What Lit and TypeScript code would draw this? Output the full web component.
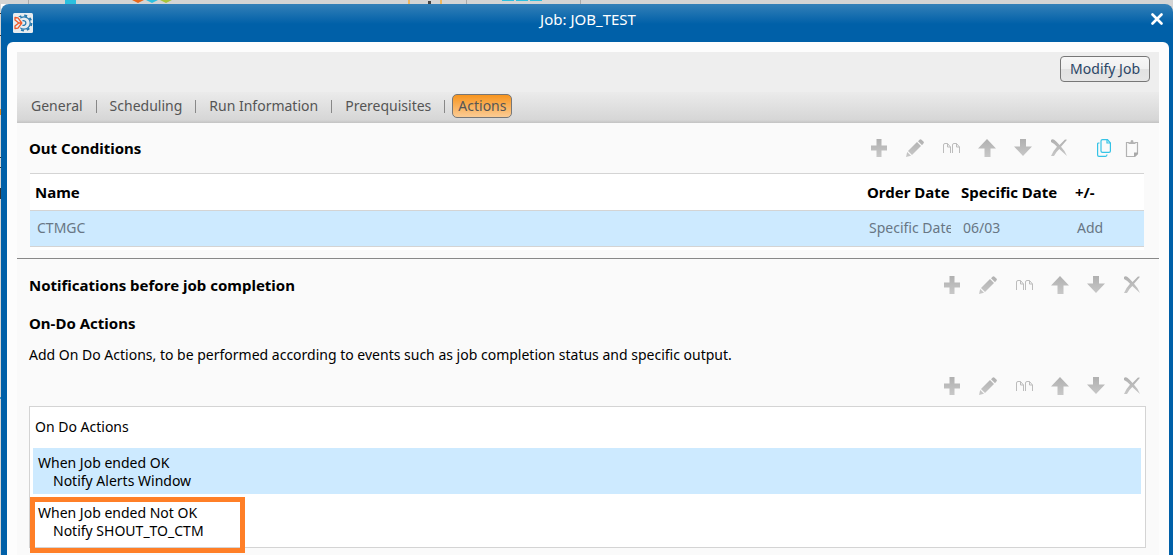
import { LitElement, html, css, svg } from "lit";
import { customElement, property, state } from "lit/decorators.js";

const glyphs: Record<string, unknown> = {
  add: svg`<path fill="url(#g)" d="M6.500 0h5v6.500H17v5h-5.500V18h-5v-6.500H1v-5h5.500z"/>`,
  edit: svg`<g fill="url(#g)"><path d="M0 18l1.200-5 3.800 3.800z"/><path d="M2 12L11 3l4 4-9 9z"/><path d="M12 2.200L13.500.7q1-1 2 0l1.900 1.900q1 1 0 2L16 6.200z"/></g>`,
  duplicate: svg`<g fill="none" stroke="#bcbcbc"><path d="M1.500 14V6q0-1.500 1.500-1.500h2.500L8.500 8v6"/><path d="M5.500 4.500V8h3"/><path d="M10.500 14V6q0-1.500 1.500-1.500h2.500L17.500 8v6"/><path d="M14.500 4.500V8h3"/></g>`,
  up: svg`<path fill="url(#g)" d="M9 0l9 9.500h-5.500V18h-6V9.500H0z"/>`,
  down: svg`<path fill="url(#g)" d="M6 0h6v7.500h6L9 17 0 7.500h6z"/>`,
  remove: svg`<path fill="url(#g)" d="M1 1q1.500-1.500 3.500 0Q7 3 9.500 6L15 .6l2 .2-6 7q4 4 6 9.200Q13 13.500 9.300 10 6 13 4 17H1q2-5 6-9.200Q4.500 4.500 1 3z"/>`,
  copy: svg`<g fill="none" stroke="#35c3e6" stroke-width="1.200"><path d="M7.500.6h5L15.400 4v8q0 1.400-1.400 1.400H7.500Q6 13.400 6 12V2Q6 .6 7.500.6z"/><path d="M12 .6V4h3.400M4.500 4H3.600Q2.600 4 2.600 5v11q0 1.400 1.400 1.400h6.500q1.500 0 1.500-1.800"/></g>`,
  paste: svg`<path d="M6 3.500H3.500v14h8l3-3v-11H12" fill="none" stroke="#b2b2b2" stroke-width="1.200"/><path d="M5.500 5V3.200h2Q7.500 1 9 1t1.500 2.200h2V5z" fill="#b2b2b2"/><path d="M11 17.500v-4h4v1.500l-2.500 2.500z" fill="#a9a9a9"/>`,
};

@customElement("tool-button")
class ToolButton extends LitElement {
  @property() glyph = "add";
  @property() label = "";
  static styles = css`
    :host { display: block; flex: 0 0 auto; }
    .btn { display: flex; width: 100%; justify-content: center; padding: 0; border: 0; background: none; cursor: pointer; }
    .art { display: block; width: 18px; height: 18px; }
  `;
  render() {
    return html`<button class="btn" type="button" aria-label=${this.label}>
      <svg class="art" viewBox="0 0 18 18" aria-hidden="true">
        <defs><linearGradient id="g" gradientUnits="userSpaceOnUse" x1="0" y1="0" x2="0" y2="18">
          <stop offset="0" stop-color="#b0b0b0"/><stop offset="1" stop-color="#c8c8c8"/>
        </linearGradient></defs>
        ${glyphs[this.glyph]}
      </svg></button>`;
  }
}

const tools = [
  ["add", "Add"], ["edit", "Edit"], ["duplicate", "Duplicate"],
  ["up", "Move up"], ["down", "Move down"], ["remove", "Delete"],
];

@customElement("app-root")
class AppRoot extends LitElement {
  @state() tab = "Actions";

  static styles = css`
    :host { display: block; position: relative; min-height: 100vh; overflow: hidden; background: #d4d4d4;
      font-family: "Noto Sans", sans-serif; font-size: 14px; line-height: 18px; color: #000; }
    * { box-sizing: border-box; }
    .backdrop { position: absolute; left: 0; top: 0; }
    .window { position: relative; margin: 4px 0 0 1px; padding: 0 4px 0 6px; border-radius: 8px 8px 0 0;
      background: linear-gradient(#3480b8, #0060a8 20px); min-height: calc(100vh - 4px); display: flex; flex-direction: column; }
    .title { display: grid; grid-template-columns: 24px 1fr 24px; height: 38px; align-items: start; padding-top: 6px; }
    .logo { display: block; margin: 3px 0 0 6px; }
    .caption { margin: 0; font-size: 15px; font-weight: 400; text-align: center; color: #fff; }
    .close { border: 0; padding: 3px 0 0; background: none; display: flex; justify-content: center; }
    .body { flex: 1; background: #fdfdfd; border-radius: 6px 6px 0 0; padding: 10px 10px 0; display: flex; flex-direction: column; }
    .panel { flex: 1; background: #fafafa; }
    .bar { height: 40px; background: #eee; display: flex; justify-content: flex-end; padding: 4px 9px 0 0; }
    .modify { height: 26px; padding: 0 9px; border: 1px solid #777; border-radius: 4px; font: inherit; color: #2b4666;
      background: linear-gradient(#f7f7f7, #f0f0f0 48%, #e2e2e2 50%, #e6e6e6); }
    .tabs { height: 31px; display: flex; align-items: center; padding: 0 0 3px 8px; background: linear-gradient(#ebebeb, #d6d6d6 28px, #c2c2c2); }
    .tab { height: 24px; padding: 0 5px; border: 1px solid transparent; border-radius: 5px; background: none; font: inherit; color: #555; }
    .tab.on { border-color: #777; background: linear-gradient(#f7941e, #fbcb94); }
    .sep { width: 1px; height: 13px; background: #888; margin: 0 7px; }
    .section { padding: 13px 0 8px 12px; border-bottom: 1px solid #888; }
    .row { display: flex; justify-content: space-between; align-items: center; height: 24px; }
    .head { margin: 0; font-size: 15px; line-height: 24px; font-weight: 700; }
    .tools { display: flex; align-items: center; margin-left: auto; padding-right: 9px; }
    .tool { width: 36px; }
    .clip { display: flex; margin: 0 4px 0 13px; }
    .cliptool { width: 28px; }
    .grid { margin: 13px 15px 0 1px; background: #fff; padding-bottom: 3px; border-top: 1px solid #d4d4d4; }
    .table { width: 100%; table-layout: fixed; border-collapse: collapse; }
    .table th, .table td { text-align: left; padding: 0; height: 36px; border-bottom: 1px solid #d4d4d4; overflow: hidden; white-space: nowrap; }
    .table th { font-size: 15px; }
    .table th:nth-child(-n+2) { padding-left: 5px; }
    .table th:nth-child(n+3) { padding-left: 10px; }
    .table td { background: #cdeaff; color: #687684; }
    .table td:nth-child(-n+2) { padding-left: 7px; }
    .table td:nth-child(n+3) { padding-left: 12px; }
    .c2 { width: 89px; } .c3 { width: 114px; } .c4 { width: 79px; }
    .lower { padding: 14px 0 0 12px; display: flex; flex-direction: column; }
    .second { margin-top: 14px; }
    .note { margin: 11px 0 10px; }
    .list { position: relative; margin: 8px 13px 7px 0; padding: 0 4px 0 3px; height: 142px; background: #fff; border: 1px solid #d4d4d4; }
    .legend { padding: 11px 2px 12px; }
    .items { list-style: none; margin: 0; padding: 0; }
    .item { padding: 6px 5px 4px; height: 46px; margin-bottom: 4px; }
    .item.sel { background: #cdeaff; }
    .what { padding-left: 15px; }
    .mark { position: absolute; left: 0; top: 90px; width: 215px; height: 56px; border: 5px solid #ff7f27; }
  `;

  tools(clip = false) {
    return html`<div class="tools">
      ${tools.map(([g, l]) => html`<tool-button class="tool" glyph=${g} label=${l}></tool-button>`)}
      ${clip ? html`<div class="clip">
        <tool-button class="cliptool" glyph="copy" label="Copy"></tool-button>
        <tool-button class="cliptool" glyph="paste" label="Paste"></tool-button></div>` : ""}
    </div>`;
  }

  render() {
    const tabs = ["General", "Scheduling", "Run Information", "Prerequisites", "Actions"];
    return html`
      <svg class="backdrop" width="600" height="555" aria-hidden="true">
        <path fill="#aaa" d="M28 0h1v4h-1zM466 0h1v4h-1zM580 0h1v4h-1z"/>
        <path fill="#2cc0df" d="M65 0h11v4H65zM146 0h12l-6 3zM502 0h12v1h-12zM516 0h12v1h-12zM530 0h12v1h-12z"/>
        <path fill="#e8681c" d="M132 0h12l-6 3z"/><path fill="#a9c43c" d="M160 0h12l-6 3z"/>
        <path fill="#f0b75e" d="M408 0h2v4h-2zM440 0h2v4h-2z"/><path fill="#444" d="M428 1h3v3h-3z"/>
        <path fill="#fff" d="M1 4h8v8H1z"/>
        <path fill="#333" d="M0 13h1v1H0zM0 35h1v1H0zM0 157h1v1H0zM0 167h1v1H0zM0 188h1v11H0z"/>
        <path fill="#e58a1c" d="M0 109h1v6H0z"/><path fill="#3c8cbc" d="M0 397h1v2H0z"/>
      </svg>
      <main class="window">
        <header class="title">
          <svg class="logo" width="20" height="20" viewBox="0 0 20 20" aria-hidden="true">
            <rect width="20" height="20" rx="1.500" fill="#e8ecef"/>
            <circle cx="11" cy="10" r="7.400" fill="none" stroke="#2478ae" stroke-width="2" stroke-dasharray="2.900 2.910"/>
            <circle cx="11" cy="10" r="6.200" fill="#e8ecef" stroke="#2478ae" stroke-width="1.200"/>
            <path d="M0 4h7l2 6-2 6H0z" fill="#e8ecef"/>
            <path d="M9.500 7.800a2.400 2.400 0 1 1 0 4.400" fill="none" stroke="#2478ae" stroke-width="1.300"/>
            <path d="M8.800 10L5 4.800 2 4.500V7l3.800 3L2 13v2.500l3-.3zM4.500 10h4" fill="none" stroke="#ef5a2b" stroke-width="1.300" stroke-linejoin="round"/>
          </svg>
          <h1 class="caption">Job: JOB_TEST</h1>
          <button class="close" type="button" aria-label="Close">
            <svg width="12" height="12" viewBox="0 0 12 12" aria-hidden="true"><path d="M1.500 1.500l9 9m0-9l-9 9" stroke="#fff" stroke-width="2.600" stroke-linecap="round"/></svg>
          </button>
        </header>
        <div class="body"><div class="panel">
          <div class="bar"><button class="modify" type="button">Modify Job</button></div>
          <nav class="tabs">${tabs.map((t, i) => html`${i ? html`<span class="sep"></span>` : ""}<button type="button"
            class="tab ${t === this.tab ? "on" : ""}" @click=${() => (this.tab = t)}>${t}</button>`)}</nav>
          <section class="section">
            <div class="row"><h2 class="head">Out Conditions</h2>${this.tools(true)}</div>
            <div class="grid"><table class="table">
              <colgroup><col><col class="c2"><col class="c3"><col class="c4"></colgroup>
              <thead><tr><th>Name</th><th>Order Date</th><th>Specific Date</th><th>+/-</th></tr></thead>
              <tbody><tr><td>CTMGC</td><td>Specific Date</td><td>06/03</td><td>Add</td></tr></tbody>
            </table></div>
          </section>
          <section class="lower">
            <div class="row"><h2 class="head">Notifications before job completion</h2>${this.tools()}</div>
            <h2 class="head second">On-Do Actions</h2>
            <p class="note">Add On Do Actions, to be performed according to events such as job completion status and specific output.</p>
            <div class="row">${this.tools()}</div>
            <div class="list">
              <div class="legend">On Do Actions</div>
              <ul class="items">
                <li class="item sel"><div>When Job ended OK</div><div class="what">Notify Alerts Window</div></li>
                <li class="item"><div>When Job ended Not OK</div><div class="what">Notify SHOUT_TO_CTM</div></li>
              </ul>
              <div class="mark"></div>
            </div>
          </section>
        </div></div>
      </main>`;
  }
}
